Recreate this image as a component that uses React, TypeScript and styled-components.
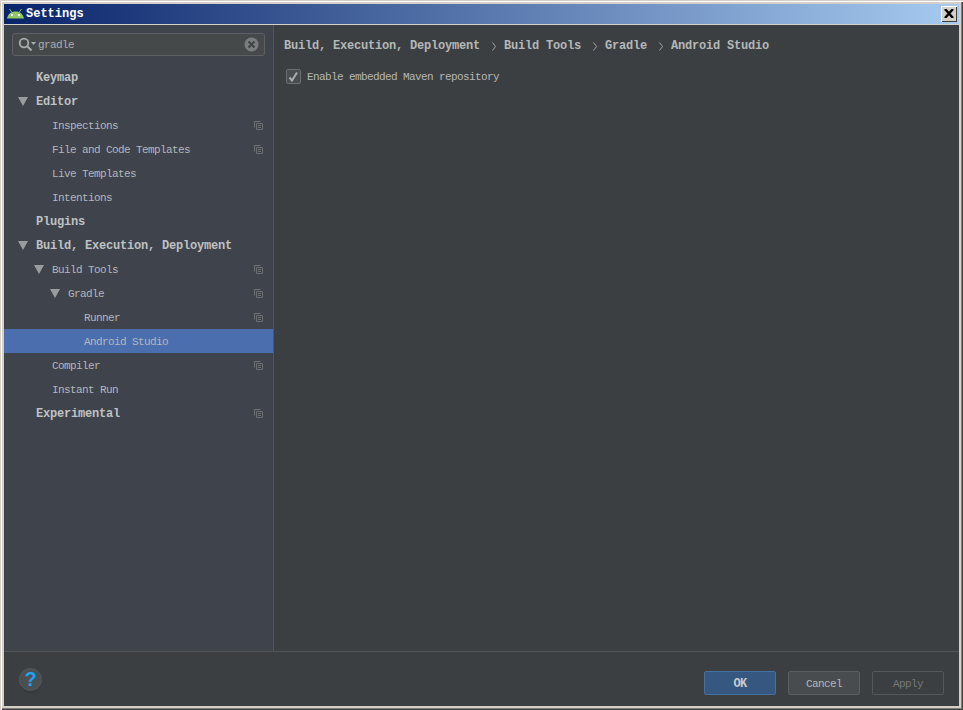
import React from "react";
import styled, { createGlobalStyle } from "styled-components";

const Global = createGlobalStyle`
  html, body { margin: 0; padding: 0; background: #d4d0c8; }
  body { font-family: "Liberation Mono", monospace; }
  * { box-sizing: border-box; }
`;

const Frame = styled.div`
  width: 963px; height: 710px; padding: 4px; background: #d4d0c8;
  box-shadow: inset 1px 1px 0 #d4d0c8, inset 2px 2px 0 #fff, inset -1px -1px 0 #404040, inset -2px -2px 0 #808080;
`;
const Win = styled.div`
  width: 100%; height: 100%; display: flex; flex-direction: column;
  background: #3c3f41; overflow: hidden;
`;
const TitleBar = styled.div`
  height: 21px; flex: none; display: flex; align-items: center; gap: 2px; padding: 0 2px 1px 3px;
  background: linear-gradient(90deg, #0a246a, #a6caf0);
  border-bottom: 1px solid #d4d0c8;
`;
const TitleText = styled.span`
  flex: 1; padding-top: 1px; color: #fff; font: bold 12px "Liberation Mono", monospace;
`;
const CloseBtn = styled.div`
  width: 16px; height: 16px; background: #d4d0c8; display: flex; align-items: center; justify-content: center;
  box-shadow: inset 1px 1px 0 #fff, inset -1px -1px 0 #404040;
`;
const Body = styled.div`flex: 1; display: flex; min-height: 0;`;
const Side = styled.div`
  width: 270px; flex: none; background: #3e434c; border-right: 1px solid #515658; padding-top: 8px;
`;
const Search = styled.div`
  margin: 0 8px 0 8px; height: 23px; border: 1px solid #5e6162; border-radius: 3px; background: #45494a;
  display: flex; align-items: center; padding: 0 5px 0 5px;
`;
const SearchText = styled.span`
  flex: 1; margin-left: 1px; color: #a9adaf; font-size: 11px; letter-spacing: -.6px;
`;
const Tree = styled.div`padding-top: 9px;`;
const Row = styled.div<{ $depth: number; $selected?: boolean }>`
  height: 24px; display: flex; align-items: center; position: relative;
  padding-left: ${p => 32 + p.$depth * 16}px; padding-right: 10px;
  background: ${p => (p.$selected ? "#4b6eaf" : "transparent")};
`;
const Label = styled.span<{ $bold?: boolean }>`
  flex: 1; padding-top: 1px; color: ${p => (p.$bold ? "#bfc1c2" : "#b4b7b9")};
  font-size: ${p => (p.$bold ? "12px" : "11px")}; font-weight: ${p => (p.$bold ? 700 : 400)};
  letter-spacing: ${p => (p.$bold ? "-0.2px" : "-.6px")};
`;
const Arrow = styled.span<{ $depth: number }>`
  position: absolute; top: 8px; left: ${p => 14 + p.$depth * 16}px; width: 0; height: 0;
  border-left: 5px solid transparent; border-right: 5px solid transparent; border-top: 9px solid #9a9d9f;
`;
const Main = styled.div`flex: 1; padding: 0 0 0 10px; min-width: 0;`;
const Crumbs = styled.div`
  display: flex; align-items: center; height: 16px; margin-top: 13px; white-space: pre;
`;
const Crumb = styled.span`
  color: #b4b7b8; font-size: 12px; font-weight: 700; letter-spacing: -.2px;
`;
const Sep = styled.svg`margin: 0 8px 0 12px; flex: none;`;
const CheckRow = styled.div`display: flex; align-items: center; gap: 6px; margin: 15px 0 0 2px;`;
const CheckBox = styled.div`
  width: 15px; height: 15px; border: 1px solid #6b6f71; border-radius: 2px; background: #4a4d4f;
  display: flex; align-items: center; justify-content: center;
`;
const CheckLabel = styled.span`color: #b4b7b9; font-size: 11px; letter-spacing: -.6px;`;
const Footer = styled.div`
  height: 55px; flex: none; border-top: 1px solid #515658; display: flex; align-items: center;
  padding: 0 15px 0 15px; background: #3c3f41;
`;
const Help = styled.div`
  width: 23px; height: 23px; border-radius: 50%; background: #4a4f52; border: 1px solid #55595c;
  color: #1da2f0; font: bold 20px "Liberation Sans", sans-serif; display: flex; align-items: center; justify-content: center;
  box-shadow: 0 6px 3px -4px #33363a;
`;
const Spacer = styled.div`flex: 1;`;
const Btn = styled.div<{ $kind: "primary" | "normal" | "off" }>`
  width: 72px; height: 24px; margin: 8px 0 0 12px; padding-top: 1px; border-radius: 2px; display: flex; align-items: center; justify-content: center;
  font-size: ${p => (p.$kind === "primary" ? "12px" : "11px")}; letter-spacing: -.6px;
  border: 1px solid ${p => (p.$kind === "primary" ? "#456f9e" : p.$kind === "normal" ? "#5c5f61" : "#55585a")};
  background: ${p => (p.$kind === "primary" ? "#365880" : p.$kind === "normal" ? "#494c4e" : "transparent")};
  color: ${p => (p.$kind === "primary" ? "#c6cbd0" : p.$kind === "normal" ? "#b4b7b9" : "#75787a")};
  font-weight: ${p => (p.$kind === "primary" ? 700 : 400)};
`;

const Copy = () => (
  <svg width="9" height="9" viewBox="0 0 9 9" fill="none" stroke="#6d7073">
    <path d="M.5 6.5V.5h6" />
    <path d="M2.5 8.5V2.5h6v6zM4 4.5h3M4 6.5h3" />
  </svg>
);

type Item = { t: string; d: number; b?: boolean; a?: boolean; c?: boolean; s?: boolean };
const items: Item[] = [
  { t: "Keymap", d: 0, b: true },
  { t: "Editor", d: 0, b: true, a: true },
  { t: "Inspections", d: 1, c: true },
  { t: "File and Code Templates", d: 1, c: true },
  { t: "Live Templates", d: 1 },
  { t: "Intentions", d: 1 },
  { t: "Plugins", d: 0, b: true },
  { t: "Build, Execution, Deployment", d: 0, b: true, a: true },
  { t: "Build Tools", d: 1, a: true, c: true },
  { t: "Gradle", d: 2, a: true, c: true },
  { t: "Runner", d: 3, c: true },
  { t: "Android Studio", d: 3, s: true },
  { t: "Compiler", d: 1, c: true },
  { t: "Instant Run", d: 1 },
  { t: "Experimental", d: 0, b: true, c: true },
];

const crumbs = ["Build, Execution, Deployment", "Build Tools", "Gradle", "Android Studio"];

export default function App() {
  return (
    <>
      <Global />
      <Frame>
        <Win>
          <TitleBar>
            <svg width="17" height="10" viewBox="0 0 17 10">
              <path d="M0 9.5C1 5 4 2.5 8.5 2.5S16 5 17 9.5z" fill="#8fc860" />
              <path d="M2.5 0l2.5 3.5M14.5 0L12 3.5" stroke="#8fc860" />
              <rect x="4" y="5" width="2" height="2" fill="#fff" />
              <rect x="11" y="5" width="2" height="2" fill="#fff" />
            </svg>
            <TitleText>Settings</TitleText>
            <CloseBtn>
              <svg width="10" height="9" viewBox="0 0 10 9" stroke="#000" strokeWidth="2.4"><path d="M1 0l8 9M9 0L1 9" /></svg>
            </CloseBtn>
          </TitleBar>
          <Body>
            <Side>
              <Search>
                <svg width="19" height="15" viewBox="0 0 19 15" fill="none">
                  <circle cx="6" cy="6" r="4.3" stroke="#a9adaf" strokeWidth="1.8" />
                  <path d="M9.5 9.5l4 4" stroke="#a9adaf" strokeWidth="2.2" />
                  <path d="M13 5h5l-2.5 3z" fill="#a9adaf" />
                </svg>
                <SearchText>gradle</SearchText>
                <svg width="15" height="15" viewBox="0 0 15 15">
                  <circle cx="7.5" cy="7.5" r="7" fill="#7b7e80" />
                  <path d="M4.5 4.5l6 6M10.5 4.5l-6 6" stroke="#3f4344" strokeWidth="2" />
                </svg>
              </Search>
              <Tree>
                {items.map(i => (
                  <Row key={i.t} $depth={i.d} $selected={i.s}>
                    {i.a && <Arrow $depth={i.d} />}
                    <Label $bold={i.b}>{i.t}</Label>
                    {i.c && <Copy />}
                  </Row>
                ))}
              </Tree>
            </Side>
            <Main>
              <Crumbs>
                {crumbs.map((c, n) => (
                  <React.Fragment key={c}>
                    {n > 0 && (
                      <Sep width="4" height="9" viewBox="0 0 4 9" fill="none" stroke="#a0a3a5"><path d="M.5.5l3 4-3 4" /></Sep>
                    )}
                    <Crumb>{c}</Crumb>
                  </React.Fragment>
                ))}
              </Crumbs>
              <CheckRow>
                <CheckBox>
                  <svg width="11" height="10" viewBox="0 0 11 10" fill="none" stroke="#a9adaf" strokeWidth="2"><path d="M1.5 5.5l2.5 3 5-8" /></svg>
                </CheckBox>
                <CheckLabel>Enable embedded Maven repository</CheckLabel>
              </CheckRow>
            </Main>
          </Body>
          <Footer>
            <Help>?</Help>
            <Spacer />
            <Btn $kind="primary">OK</Btn>
            <Btn $kind="normal">Cancel</Btn>
            <Btn $kind="off">Apply</Btn>
          </Footer>
        </Win>
      </Frame>
    </>
  );
}
